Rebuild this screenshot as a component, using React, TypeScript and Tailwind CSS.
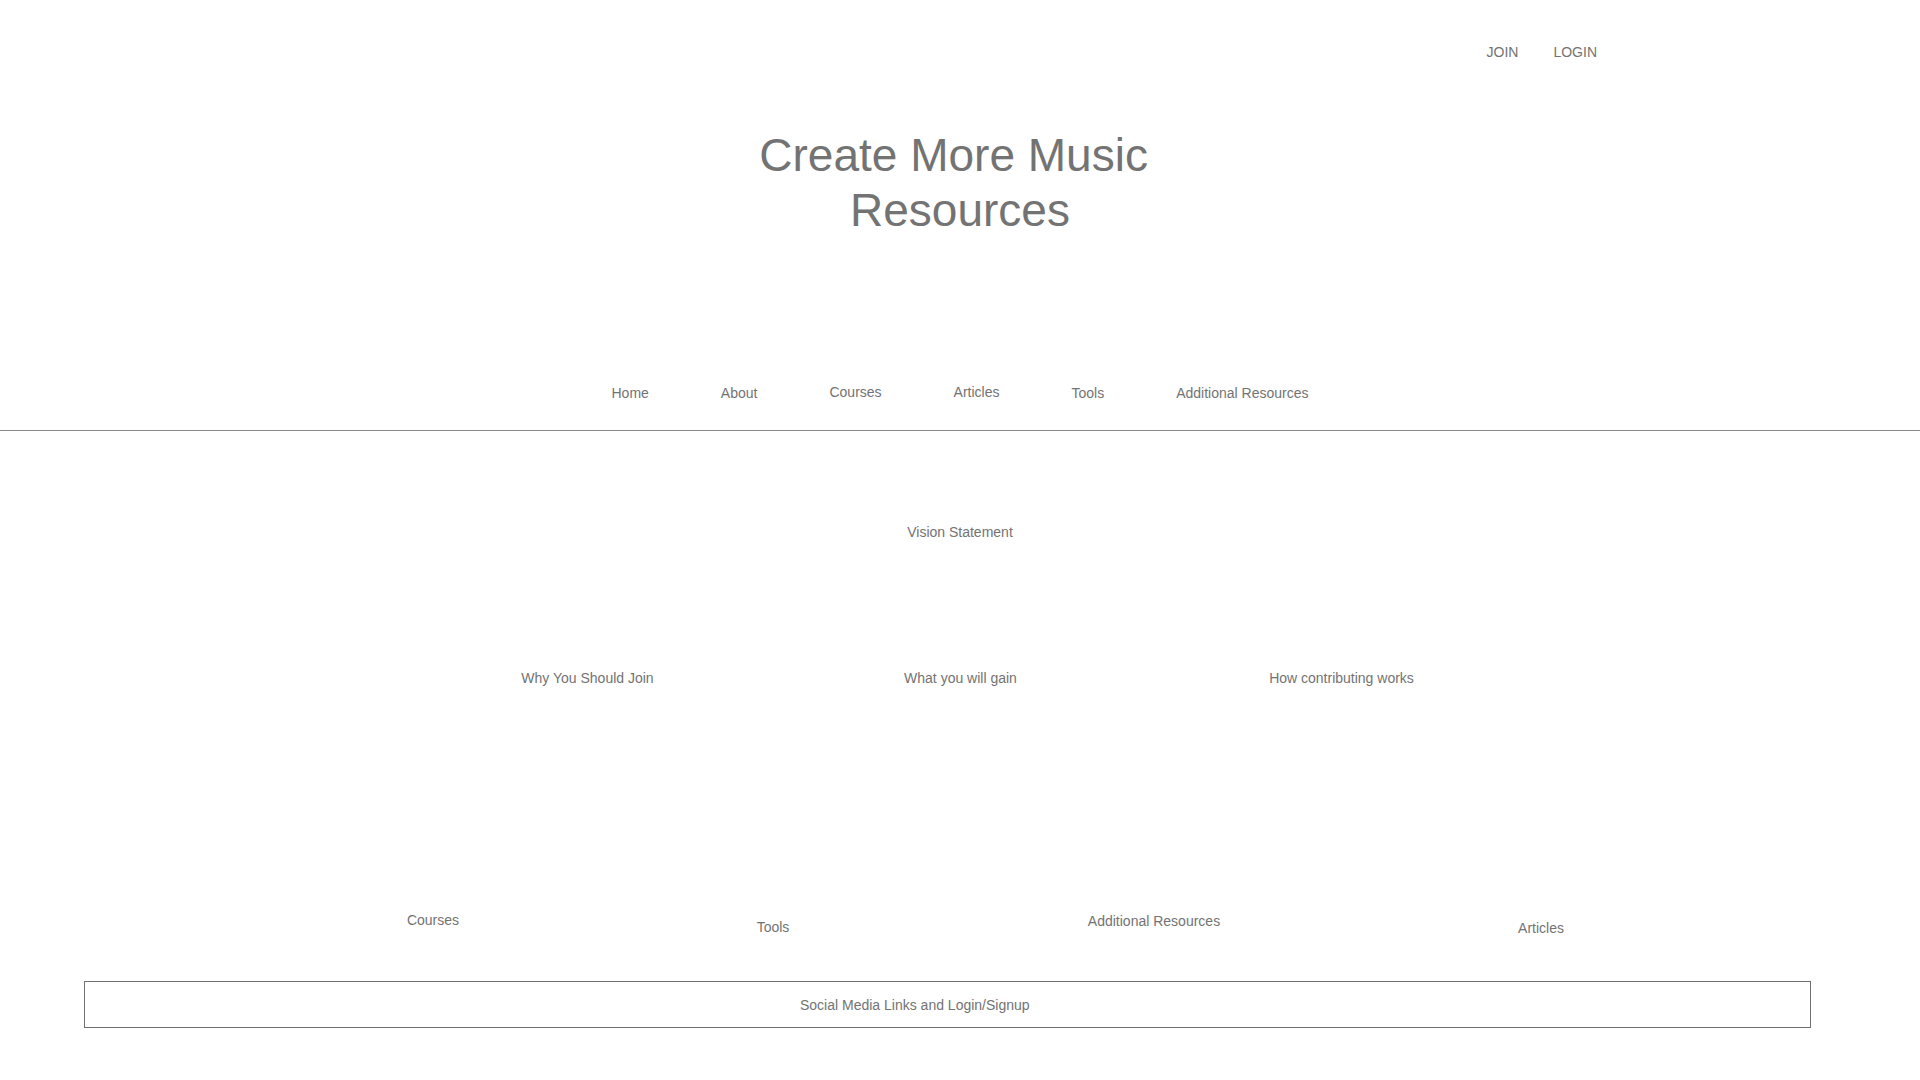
export default function App() {
  const nav = ['Home', 'About', 'Courses', 'Articles', 'Tools', 'Additional Resources']
  return (
    <div className="min-h-screen bg-white text-[#737373] text-[14px] leading-[20px]" style={{ fontFamily: '"Liberation Sans", Arial, sans-serif' }}>
      {/* Top links */}
      <header className="pt-[42px] flex justify-end pr-[323px] gap-[35px]">
        <a href="#">JOIN</a>
        <a href="#">LOGIN</a>
      </header>

      {/* Title */}
      <h1 className="mt-[66px] text-center text-[46px] leading-[55px] text-[#737373]">
        Create More Music{'\u00a0'}
        <br />
        Resources
      </h1>

      {/* Nav */}
      <nav className="mt-[145px] flex justify-center gap-[72px]">
        {nav.map((n) => (
          <a key={n} href="#" className={n === 'Courses' || n === 'Articles' ? '-mt-px' : ''}>
            {n}
          </a>
        ))}
      </nav>
      <div className="mt-[27px] h-px bg-[#8a8a8a]" />

      {/* Vision */}
      <section className="mt-[91px] text-center">Vision Statement</section>

      {/* Three column */}
      <section className="mt-[126px] ml-[401px] grid grid-cols-[373px_373px_389px] text-center">
        <div>Why You Should Join</div>
        <div>What you will gain</div>
        <div>How contributing works</div>
      </section>

      {/* Four column */}
      <section className="mt-[222px] ml-[263px] grid grid-cols-[340px_340px_422px_352px] items-start text-center">
        <div>Courses</div>
        <div className="mt-[7px]">Tools</div>
        <div className="mt-px">Additional Resources</div>
        <div className="mt-[8px]">Articles</div>
      </section>

      {/* Footer */}
      <footer className="mt-[43px] ml-[84px] w-[1727px] h-[47px] border border-[#707070] flex items-center pl-[715px]">
        Social Media Links and Login/Signup
      </footer>
    </div>
  )
}
